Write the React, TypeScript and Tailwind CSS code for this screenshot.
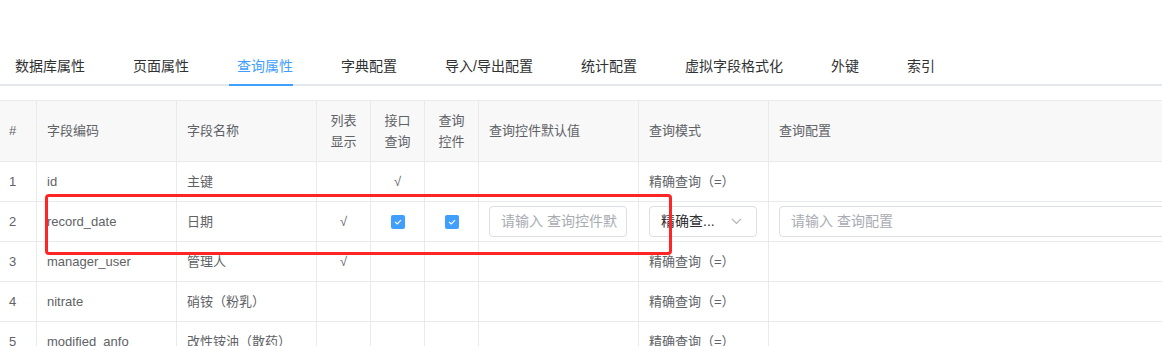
import React from "react";

const tabs = ["数据库属性", "页面属性", "查询属性", "字典配置", "导入/导出配置", "统计配置", "虚拟字段格式化", "外键", "索引"];

const cols = "grid grid-cols-[37px_140px_140px_54px_54px_54px_160px_130px_420px]";
const cell = "border-r border-b border-[#e8eaec] flex items-center";

function Check() {
  return (
    <span className="w-[14px] h-[14px] rounded-[2px] bg-[#409eff] flex items-center justify-center">
      <svg width="10" height="10" viewBox="0 0 10 10" fill="none">
        <path d="M2.3 5.2 L4.2 7 L7.7 3.3" stroke="white" strokeWidth="1.1" strokeLinecap="round" strokeLinejoin="round" />
      </svg>
    </span>
  );
}

type Row = { n: string; code: string; name: string; list?: boolean; api?: boolean; mode: string };

const rows: Row[] = [
  { n: "1", code: "id", name: "主键", api: true, mode: "精确查询（=）" },
  { n: "2", code: "record_date", name: "日期", list: true, mode: "" },
  { n: "3", code: "manager_user", name: "管理人", list: true, mode: "精确查询（=）" },
  { n: "4", code: "nitrate", name: "硝铵（粉乳）", mode: "精确查询（=）" },
  { n: "5", code: "modified_anfo", name: "改性铵油（散药）", mode: "精确查询（=）" },
];

export default function App() {
  return (
    <div className="relative w-[1162px] h-[346px] overflow-hidden bg-white font-['Liberation_Sans','Noto_Sans_CJK_SC',sans-serif]">
      <div className="pt-[48px]">
        <div className="flex h-[38px] items-center gap-[48px] pl-[15px] border-b-2 border-[#e4e7ed] text-[14px] text-[#303133]">
          {tabs.map((t, i) => (
            <div key={t} className={"relative h-full flex items-center " + (i === 2 ? "text-[#409eff]" : "")}>
              {t}
              {i === 2 && <span className="absolute left-[-8px] right-0 bottom-[-2px] h-[2px] bg-[#409eff]" />}
            </div>
          ))}
        </div>
      </div>

      <div className="mt-[14px] border-t border-[#e8eaec] text-[13px] text-[#606266]">
        <div className={cols + " bg-[#f8f8f9] h-[61px]"}>
          <div className={cell + " pl-[9px]"}>#</div>
          <div className={cell + " pl-[10px]"}>字段编码</div>
          <div className={cell + " pl-[10px]"}>字段名称</div>
          <div className={cell + " justify-center text-center leading-[21px]"}>列表<br />显示</div>
          <div className={cell + " justify-center text-center leading-[21px]"}>接口<br />查询</div>
          <div className={cell + " justify-center text-center leading-[21px]"}>查询<br />控件</div>
          <div className={cell + " pl-[10px]"}>查询控件默认值</div>
          <div className={cell + " pl-[10px]"}>查询模式</div>
          <div className={cell + " pl-[10px]"}>查询配置</div>
        </div>
        {rows.map((r) => (
          <div key={r.n} className={cols + " h-[40px]"}>
            <div className={cell + " pl-[9px]"}>{r.n}</div>
            <div className={cell + " pl-[10px]"}>{r.code}</div>
            <div className={cell + " pl-[10px]"}>{r.name}</div>
            <div className={cell + " justify-center"}>{r.list ? "√" : ""}</div>
            <div className={cell + " justify-center"}>{r.api ? "√" : r.n === "2" ? <Check /> : ""}</div>
            <div className={cell + " justify-center"}>{r.n === "2" ? <Check /> : ""}</div>
            <div className={cell + " pl-[10px] pr-[11px]"}>
              {r.n === "2" && (
                <div className="w-full h-[31px] border border-[#dcdfe6] rounded-[4px] px-[11px] flex items-center text-[14px] text-[#a8abb2] whitespace-nowrap overflow-hidden">
                  请输入 查询控件默
                </div>
              )}
            </div>
            <div className={cell + " pl-[10px] pr-[11px]"}>
              {r.n === "2" ? (
                <div className="w-full h-[31px] border border-[#dcdfe6] rounded-[4px] pl-[11px] pr-[14px] flex items-center justify-between text-[14px] text-[#303133] whitespace-nowrap">
                  <span>精确查...</span>
                  <svg width="11" height="7" viewBox="0 0 11 7" fill="none">
                    <path d="M1 1 L5.5 5.5 L10 1" stroke="#b0b3ba" strokeWidth="1.1" />
                  </svg>
                </div>
              ) : (
                r.mode
              )}
            </div>
            <div className={cell + " pl-[10px]"}>
              {r.n === "2" && (
                <div className="w-full h-[31px] border border-[#dcdfe6] rounded-[4px] px-[11px] flex items-center text-[14px] text-[#a8abb2] whitespace-nowrap">
                  请输入 查询配置
                </div>
              )}
            </div>
          </div>
        ))}
      </div>

      <div className="absolute left-[45px] top-[194px] w-[627px] h-[61px] border-[3px] border-[#fe2525] rounded-[4px]" />
    </div>
  );
}
